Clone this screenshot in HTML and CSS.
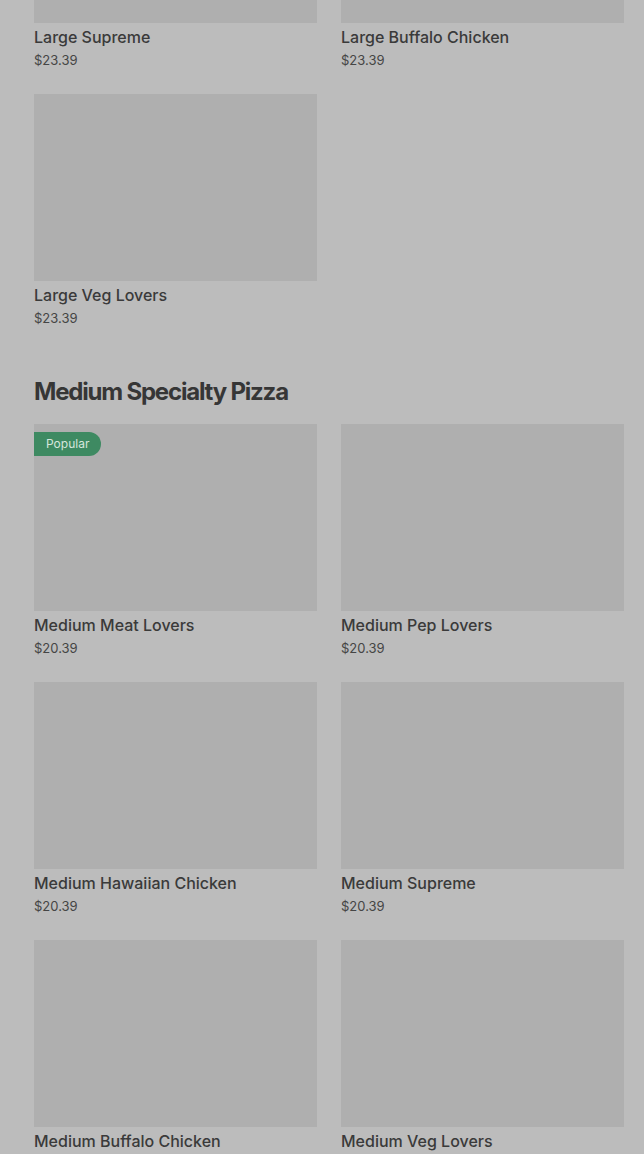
FILE: index.html
```html
<!DOCTYPE html>
<html lang="en">
<head>
    <meta charset="UTF-8">
    <meta name="viewport" content="width=device-width, initial-scale=1.0">
    <title>Menu</title>
    <link rel="stylesheet" href="styles.css">
</head>
<body>
    <div class="menu">
        <section class="category">
            <div class="grid">
                <a href="#" class="item">
                    <div class="photo"></div>
                    <div class="name">Large Supreme</div>
                    <div class="price">$23.39</div>
                </a>
                <a href="#" class="item">
                    <div class="photo"></div>
                    <div class="name">Large Buffalo Chicken</div>
                    <div class="price">$23.39</div>
                </a>
                <a href="#" class="item">
                    <div class="photo"></div>
                    <div class="name">Large Veg Lovers</div>
                    <div class="price">$23.39</div>
                </a>
            </div>
        </section>
        <section class="category">
            <h2>Medium Specialty Pizza</h2>
            <div class="grid">
                <a href="#" class="item">
                    <div class="photo">
                        <span class="badge">Popular</span>
                    </div>
                    <div class="name">Medium Meat Lovers</div>
                    <div class="price">$20.39</div>
                </a>
                <a href="#" class="item">
                    <div class="photo"></div>
                    <div class="name">Medium Pep Lovers</div>
                    <div class="price">$20.39</div>
                </a>
                <a href="#" class="item">
                    <div class="photo"></div>
                    <div class="name">Medium Hawaiian Chicken</div>
                    <div class="price">$20.39</div>
                </a>
                <a href="#" class="item">
                    <div class="photo"></div>
                    <div class="name">Medium Supreme</div>
                    <div class="price">$20.39</div>
                </a>
                <a href="#" class="item">
                    <div class="photo"></div>
                    <div class="name">Medium Buffalo Chicken</div>
                    <div class="price">$20.39</div>
                </a>
                <a href="#" class="item">
                    <div class="photo"></div>
                    <div class="name">Medium Veg Lovers</div>
                    <div class="price">$20.39</div>
                </a>
            </div>
        </section>
    </div>
</body>
</html>
```

FILE: styles.css
```css
body {
    margin: 0;
    background: #bcbcbc;
    font-family: Inter, "Liberation Sans", sans-serif;
    color: #3a3a3a;
}

.menu {
    padding: 0 20px 0 34px;
    margin-top: -164px;
}

.category h2 {
    margin: 48px 0 16px;
    font-size: 24px;
    line-height: 32px;
    font-weight: 700;
    letter-spacing: -1.2px;
    color: #363636;
}

.grid {
    display: grid;
    grid-template-columns: 283px 283px;
    column-gap: 24px;
    row-gap: 24px;
}

.item {
    display: block;
    text-decoration: none;
    color: inherit;
}

.photo {
    height: 187px;
    background: #afafaf;
    padding-top: 8px;
    box-sizing: border-box;
}

.badge {
    display: inline-block;
    height: 24px;
    line-height: 24px;
    padding: 0 12px;
    font-size: 12px;
    color: #d6e6dc;
    background: #3e8a62;
    border-radius: 0 12px 12px 0;
}

.name {
    margin-top: 3px;
    font-size: 16px;
    line-height: 22px;
    font-weight: 500;
    color: #3a3a3a;
}

.price {
    margin-top: 2px;
    font-size: 13px;
    line-height: 20px;
    color: #454545;
}
```
